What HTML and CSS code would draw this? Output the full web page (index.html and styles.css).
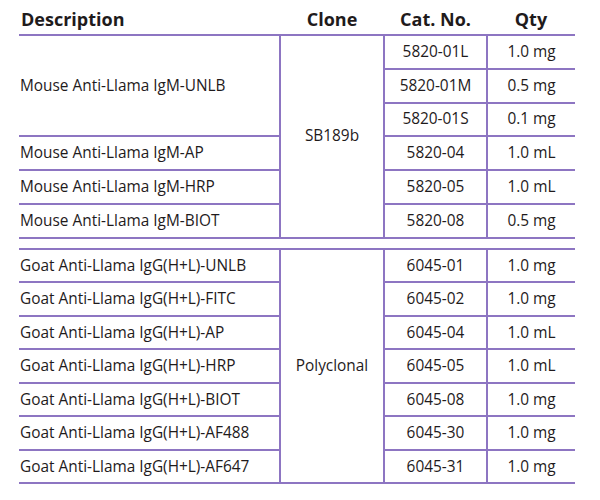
FILE: index.html
```html
<!DOCTYPE html>
<html>
<head>
<meta charset="utf-8">
<link rel="stylesheet" href="styles.css">
</head>
<body>
<div class="wrap">
<table class="tbl first">
  <colgroup><col class="c1"><col class="c2"><col class="c3"><col class="c4"></colgroup>
  <thead>
    <tr class="head"><th class="desc">Description</th><th>Clone</th><th>Cat. No.</th><th>Qty</th></tr>
  </thead>
  <tbody>
    <tr><td class="desc" rowspan="3">Mouse Anti-Llama IgM-UNLB</td><td rowspan="6">SB189b</td><td>5820-01L</td><td>1.0 mg</td></tr>
    <tr><td>5820-01M</td><td>0.5 mg</td></tr>
    <tr><td>5820-01S</td><td>0.1 mg</td></tr>
    <tr><td class="desc">Mouse Anti-Llama IgM-AP</td><td>5820-04</td><td>1.0 mL</td></tr>
    <tr><td class="desc">Mouse Anti-Llama IgM-HRP</td><td>5820-05</td><td>1.0 mL</td></tr>
    <tr><td class="desc">Mouse Anti-Llama IgM-BIOT</td><td>5820-08</td><td>0.5 mg</td></tr>
  </tbody>
</table>
<table class="tbl second">
  <colgroup><col class="c1"><col class="c2"><col class="c3"><col class="c4"></colgroup>
  <tbody>
    <tr><td class="desc">Goat Anti-Llama IgG(H+L)-UNLB</td><td rowspan="7">Polyclonal</td><td>6045-01</td><td>1.0 mg</td></tr>
    <tr><td class="desc">Goat Anti-Llama IgG(H+L)-FITC</td><td>6045-02</td><td>1.0 mg</td></tr>
    <tr><td class="desc">Goat Anti-Llama IgG(H+L)-AP</td><td>6045-04</td><td>1.0 mL</td></tr>
    <tr><td class="desc">Goat Anti-Llama IgG(H+L)-HRP</td><td>6045-05</td><td>1.0 mL</td></tr>
    <tr><td class="desc">Goat Anti-Llama IgG(H+L)-BIOT</td><td>6045-08</td><td>1.0 mg</td></tr>
    <tr><td class="desc">Goat Anti-Llama IgG(H+L)-AF488</td><td>6045-30</td><td>1.0 mg</td></tr>
    <tr><td class="desc">Goat Anti-Llama IgG(H+L)-AF647</td><td>6045-31</td><td>1.0 mg</td></tr>
  </tbody>
</table>
</div>
</body>
</html>
```
FILE: styles.css
```css
html, body {
  margin: 0;
  padding: 0;
  background: #ffffff;
}
body {
  font-family: "Open Sans", "Noto Sans", sans-serif;
  color: #1f1b1c;
}
.wrap {
  padding-left: 19px;
  width: 556px;
}
.tbl {
  border-collapse: collapse;
  table-layout: fixed;
  width: 556px;
}
.c1 { width: 261px; }
.c2 { width: 104px; }
.c3 { width: 103px; }
.c4 { width: 88px; }
.tbl th,
.tbl td {
  padding: 0;
  text-align: center;
  font-size: 15.4px;
  font-weight: 400;
  border: 2px solid #8d75c2;
  height: 31.5px;
  line-height: 16px;
}
.first td {
  height: 31.8px;
}
.tbl th {
  font-weight: 700;
  font-size: 18px;
  border-top: none;
  border-left: none;
  border-right: none;
  height: 30px;
  padding-top: 4px;
  vertical-align: middle;
}
.tbl td:last-child { border-right: none; }
.tbl td.desc {
  text-align: left;
  padding-left: 1px;
  border-left: none;
}
.tbl th.desc {
  text-align: left;
  padding-left: 2px;
}
.second {
  margin-top: 9px;
}
```
